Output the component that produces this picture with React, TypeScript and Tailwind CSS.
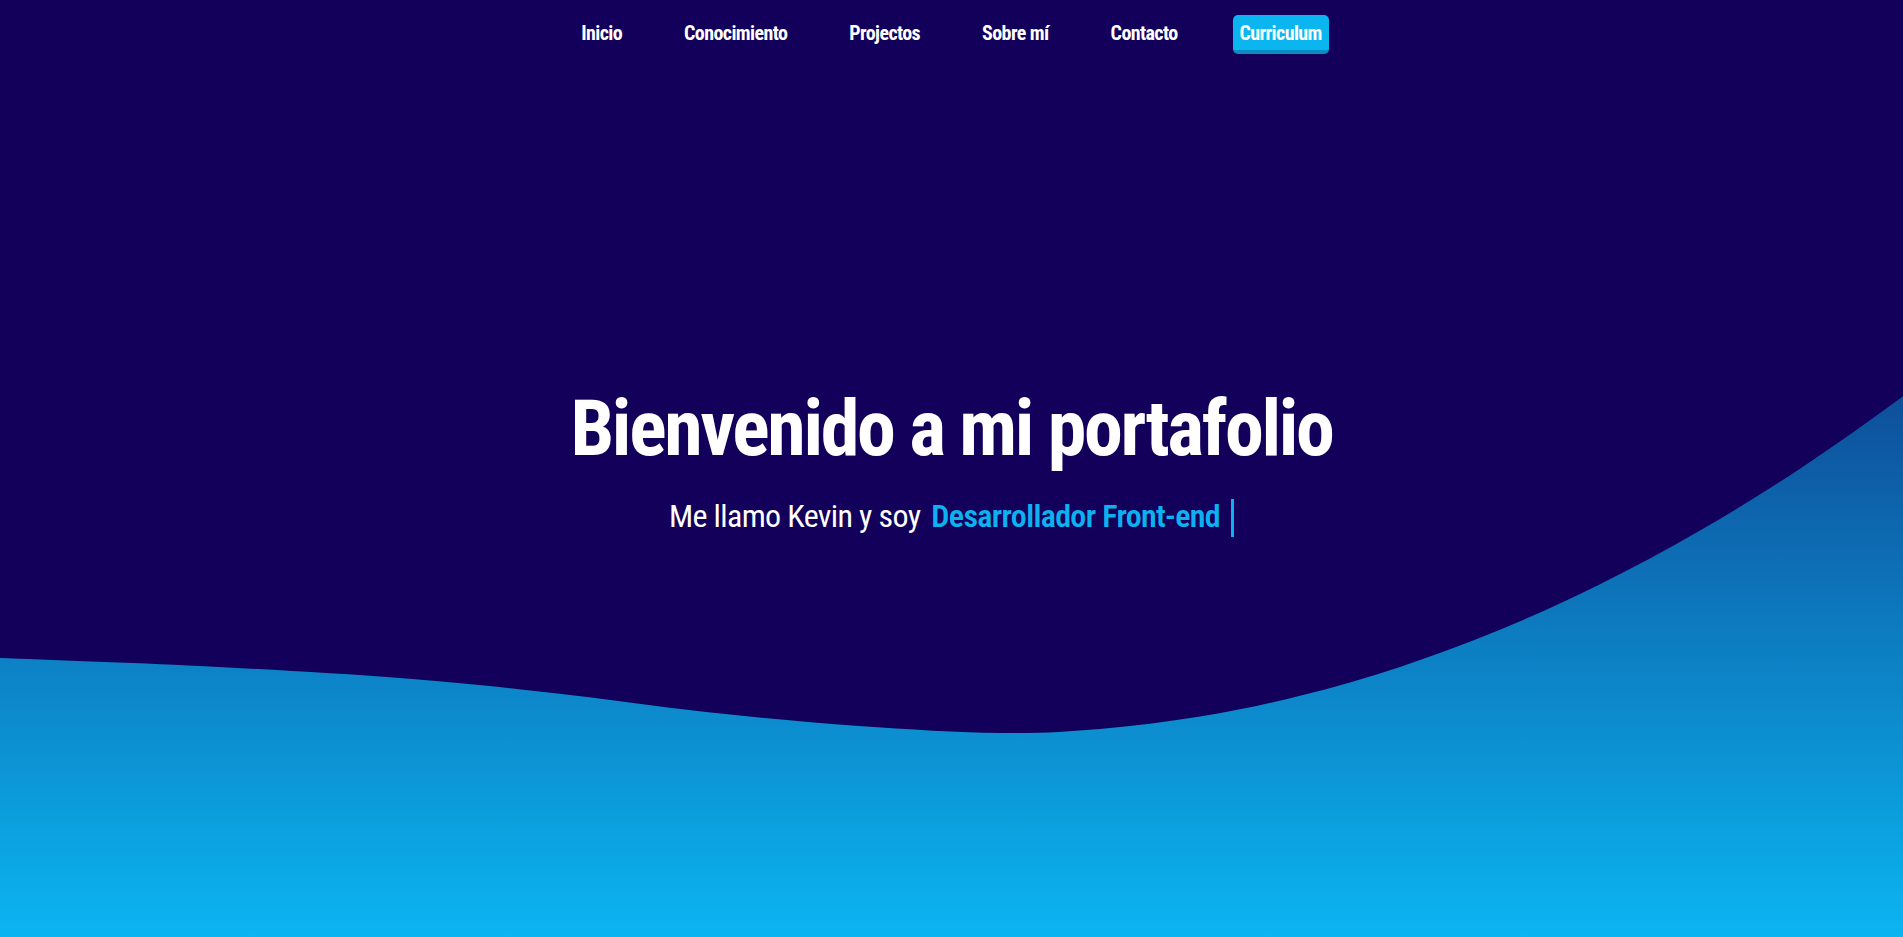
import React from 'react';

const links = ['Inicio', 'Conocimiento', 'Projectos', 'Sobre mí', 'Contacto'];

// left half of the wave edge, traced from the design; the right half is a parabola
const leftPoints: [number, number][] = [
  [-60, 655], [0, 658], [200, 666], [400, 678], [553, 693], [706, 712], [859, 726], [1000, 733],
];
const rightPoints: [number, number][] = [1100, 1200, 1300, 1400, 1500, 1600, 1700, 1800, 1903, 1980].map(
  (x) => [x, 733 - 0.000413 * (x - 1000) * (x - 1000)] as [number, number]
);

function wavePath(pts: [number, number][]) {
  let d = `M${pts[0][0]},${pts[0][1]}`;
  for (let i = 0; i < pts.length - 1; i++) {
    const p0 = pts[i - 1] || pts[i];
    const p1 = pts[i];
    const p2 = pts[i + 1];
    const p3 = pts[i + 2] || p2;
    const c1x = p1[0] + (p2[0] - p0[0]) / 6;
    const c1y = p1[1] + (p2[1] - p0[1]) / 6;
    const c2x = p2[0] - (p3[0] - p1[0]) / 6;
    const c2y = p2[1] - (p3[1] - p1[1]) / 6;
    d += ` C${c1x.toFixed(1)},${c1y.toFixed(1)} ${c2x.toFixed(1)},${c2y.toFixed(1)} ${p2[0]},${p2[1].toFixed(1)}`;
  }
  return d + ' L1980,937 L-60,937 Z';
}

const Wave = () => (
  <svg className="absolute inset-0 w-full h-full" viewBox="0 0 1903 937" preserveAspectRatio="none">
    <defs>
      <linearGradient id="wave" gradientUnits="userSpaceOnUse" x1="0" y1="396" x2="0" y2="937">
        <stop offset="0" stopColor="#0e4f9a" />
        <stop offset="1" stopColor="#0bb5f1" />
      </linearGradient>
    </defs>
    <path d={wavePath([...leftPoints, ...rightPoints])} fill="url(#wave)" />
  </svg>
);

export default function App() {
  return (
    <section className="relative h-screen overflow-hidden bg-[#12005a] text-white font-['Roboto_Condensed','Liberation_Sans_Narrow',sans-serif]">
      <Wave />
      <div className="relative z-10 flex flex-col h-full">
        <nav className="flex justify-center items-center gap-[48px] pt-[15px]">
          {links.map((l) => (
            <a key={l} href="#" className="h-[39px] px-[7px] flex items-center border-b-4 border-transparent text-[20px] font-bold tracking-[-0.03em]">
              {l}
            </a>
          ))}
          <a href="#" className="h-[39px] px-[7px] flex items-center rounded-[5px] bg-[#0bb5ef] border-b-4 border-[#0a8dc0] text-[20px] font-bold tracking-[-0.03em]">
            Curriculum
          </a>
        </nav>

        <main className="flex-1 flex flex-col items-center justify-center pb-[66px]">
          <h1 className="text-[78px] leading-none font-bold tracking-[-0.03em]">Bienvenido a mi portafolio</h1>
          <p className="mt-[21px] flex items-baseline gap-[11px] text-[32px] leading-[40px] tracking-[-0.02em]">
            <span>Me llamo Kevin y soy</span>
            <span className="font-semibold text-[#0bb2ef]">Desarrollador Front-end</span>
            <span className="w-[3px] h-[38px] translate-y-[10px] bg-[#0bb2ef]" />
          </p>
        </main>
      </div>
    </section>
  );
}
